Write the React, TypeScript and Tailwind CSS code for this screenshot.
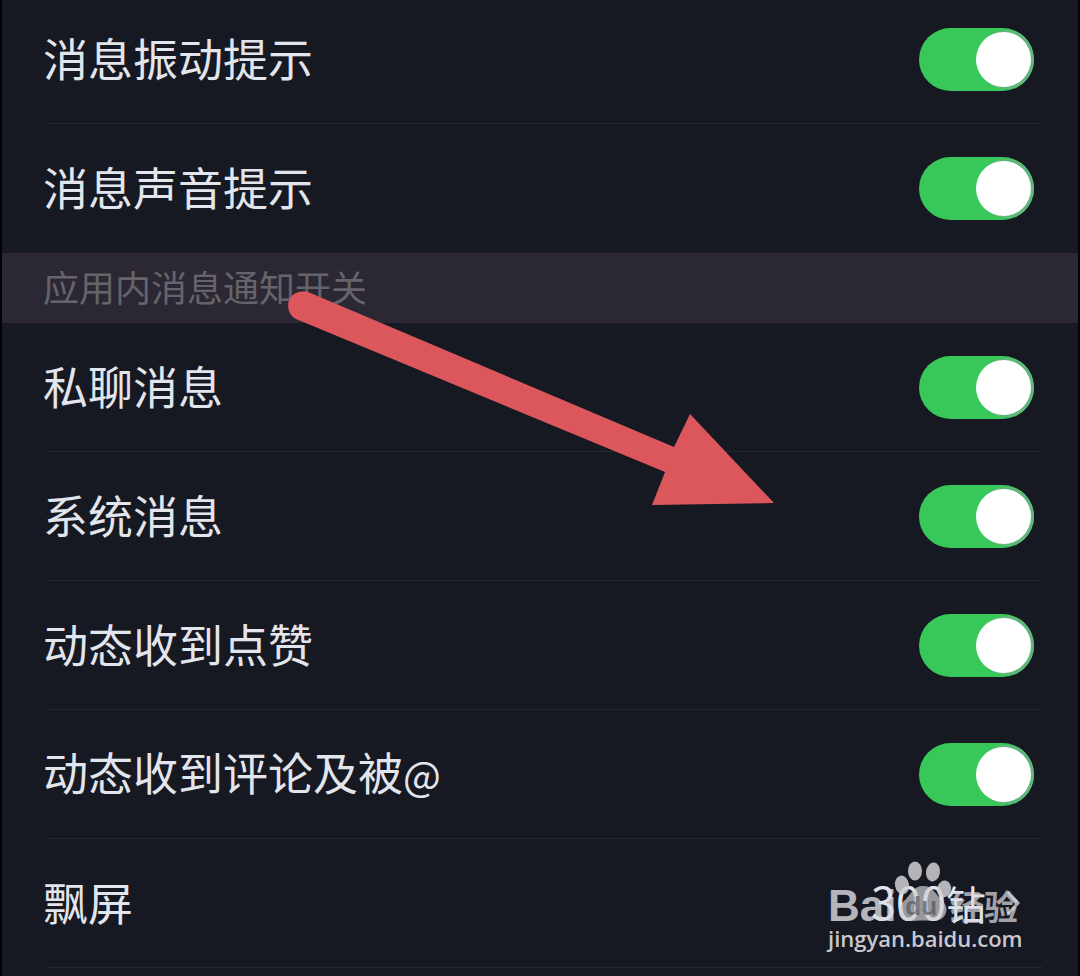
import React from "react";

const messageSettings = ["消息振动提示", "消息声音提示"];
const inAppSettings = ["私聊消息", "系统消息", "动态收到点赞", "动态收到评论及被@"];

function Toggle({ label }: { label: string }) {
  return (
    <input
      type="checkbox"
      role="switch"
      aria-label={label}
      defaultChecked
      className="relative flex h-[63px] w-[115px] shrink-0 cursor-pointer appearance-none items-center overflow-hidden rounded-full bg-[#3a3a45] px-[3px] before:size-[55px] before:rounded-full before:bg-white checked:justify-end checked:bg-[#37c859] checked:before:shadow-[3px_0_0_2px_#62b67c]"
    />
  );
}

function Label({ text }: { text: string }) {
  const [main, at] = text.split("@");
  return (
    <span className="-ml-1 pb-[3px]">
      {main}
      {at !== undefined && <span className="text-[40px]">@</span>}
    </span>
  );
}

function SettingRow({ label, first = false, last = false }: { label: string; first?: boolean; last?: boolean }) {
  return (
    <li className={first ? "h-[124px] pl-[45px]" : "h-[129px] pl-[45px]"}>
      <label
        className={
          "mr-9 flex h-full items-center justify-between pr-2 " +
          (first ? "pb-1 " : "") +
          (last ? "" : "border-b border-[#252831]")
        }
      >
        <Label text={label} />
        <Toggle label={label} />
      </label>
    </li>
  );
}

function Arrow() {
  return (
    <svg
      aria-hidden="true"
      viewBox="0 0 490 220"
      className="pointer-events-none absolute top-[288px] left-[282px] h-[220px] w-[490px]"
      fill="#dc575b"
    >
      <path d="M24 4 390 159 406 126 490 215 368 217 381 184 12 31C-2 23 3 0 24 4Z" />
    </svg>
  );
}

function Watermark() {
  return (
    <div className="pointer-events-none absolute top-[860px] right-[56px] w-[194px] text-[#dcdce0]">
      <svg aria-hidden="true" viewBox="0 0 70 64" className="absolute top-0 left-[60px] h-16 w-[70px]" fill="#d0d0d3" fillOpacity="0.85">
        <ellipse cx="27" cy="11" rx="7" ry="9.5" />
        <ellipse cx="45" cy="12" rx="7" ry="9.5" transform="rotate(8 45 12)" />
        <ellipse cx="14" cy="25" rx="7" ry="9.5" transform="rotate(-10 14 25)" />
        <ellipse cx="56" cy="29" rx="7" ry="8.5" transform="rotate(15 56 29)" />
        <path fillOpacity="0.7" d="M35 26c-9 0-12 8-18 14-9 7-8 21 4 21 8 0 14-1 22 0 15 1 20-12 11-21-7-6-9-14-19-14Z" />
      </svg>
      <div className="flex h-[68px] items-end justify-between pr-1 pb-1">
        <span className="font-['Liberation_Sans',sans-serif] text-[44px] leading-9 font-bold opacity-80">Bai</span>
        <span className="relative mr-1 font-['Liberation_Sans',sans-serif] text-[26px] leading-9 font-bold text-[#555761] opacity-70">du</span>
        <span className="text-[34px] leading-9 font-bold opacity-70">经验</span>
      </div>
      <div className="font-['Open_Sans',sans-serif] text-[22px] leading-5 font-semibold opacity-90">jingyan.baidu.com</div>
    </div>
  );
}

export default function App() {
  return (
    <main className="relative overflow-hidden border-x-2 border-black bg-[#161822] font-['Noto_Sans_CJK_SC',sans-serif] text-[45px] leading-[60px] text-[#e3e5ec]">
      <ul>
        {messageSettings.map((label, i) => (
          <SettingRow key={label} label={label} first={i === 0} last={i === messageSettings.length - 1} />
        ))}
      </ul>
      <h2 className="flex h-[70px] items-center bg-[#2b2833] px-[41px] pb-1 text-[36px] text-[#66646b]">应用内消息通知开关</h2>
      <ul>
        {inAppSettings.map((label) => (
          <SettingRow key={label} label={label} />
        ))}
        <li className="h-[129px] pl-[45px]">
          <button type="button" className="mr-9 flex h-full w-[calc(100%-36px)] items-center justify-between border-b border-[#252831] pr-[22px] text-left">
            <Label text="飘屏" />
            <span className="flex items-center gap-5">
              <span className="pb-[3px]">
                300<span className="text-[40px]">钻</span>
              </span>
              <svg aria-hidden="true" viewBox="0 0 14 26" className="h-[26px] w-[14px]" fill="none" stroke="#aeb0b7" strokeWidth="3">
                <path d="m2 2 10 11L2 24" />
              </svg>
            </span>
          </button>
        </li>
      </ul>
      <div className="h-2" />
      <Arrow />
      <Watermark />
    </main>
  );
}
